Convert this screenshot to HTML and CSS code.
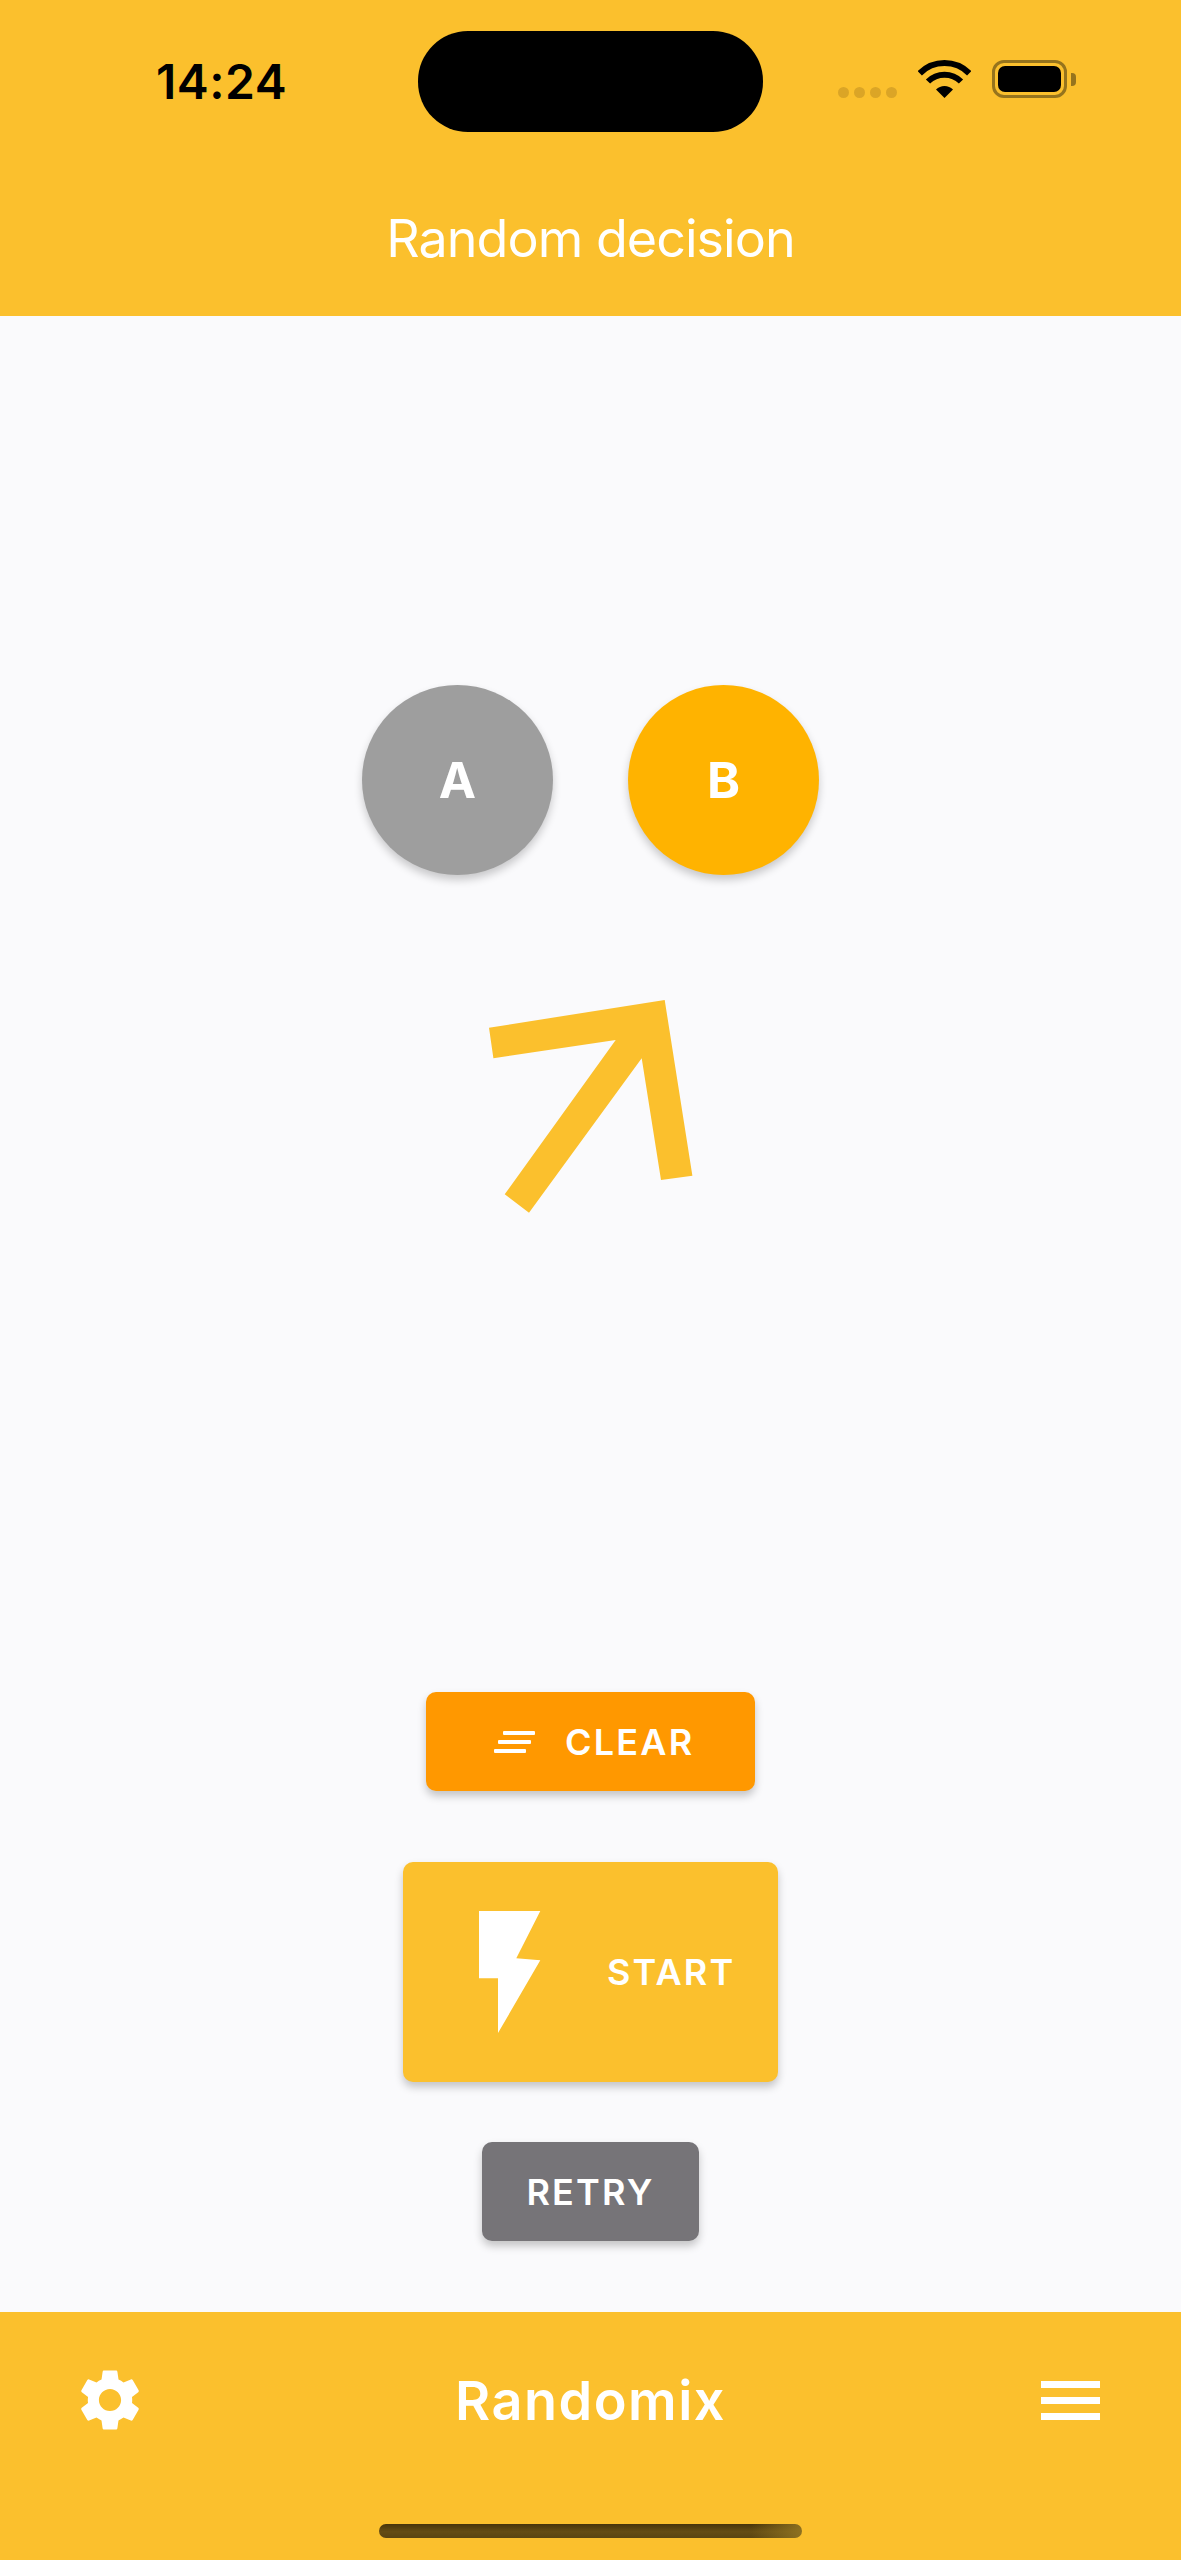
FILE: index.html
```html
<!DOCTYPE html>
<html lang="en">
<head>
  <meta charset="UTF-8">
  <meta name="viewport" content="width=device-width, initial-scale=1.0">
  <title>Randomix - Random decision</title>
  <link rel="stylesheet" href="styles.css">
</head>
<body>
  <div class="screen">
    <header class="top-bar">
      <div class="status-bar">
        <span class="time">14:24</span>
        <span class="island"></span>
        <div class="status-icons">
          <div class="signal"><i></i><i></i><i></i><i></i></div>
          <svg class="wifi" width="53" height="38" viewBox="0 0 53 38">
            <path d="M1.8 13.3A35 35 0 0 1 51.2 13.3" fill="none" stroke="#000" stroke-width="6"/>
            <path d="M10 21.5A23.3 23.3 0 0 1 43 21.5" fill="none" stroke="#000" stroke-width="6"/>
            <path d="M26.5 38L18 29.5A12 12 0 0 1 35 29.5Z" fill="#000"/>
          </svg>
          <div class="battery">
            <div class="battery-body"><div class="battery-fill"></div></div>
            <div class="battery-nub"></div>
          </div>
        </div>
      </div>
      <h1 class="page-title">Random decision</h1>
    </header>

    <main class="content">
      <div class="choices">
        <div class="choice choice-a">A</div>
        <div class="choice choice-b">B</div>
      </div>

      <svg class="arrow" width="204" height="213" viewBox="0 0 204 213">
        <polygon fill="#fbc02d" points="0,27.7 4.4,58.3 126.7,40 15.7,194.3 40,212.7 152.7,58.3 172,180 203.4,175.7 175.7,0"/>
      </svg>

      <button class="btn btn-clear" type="button">
        <svg width="41" height="22" viewBox="0 0 41 22">
          <rect x="9" y="0" width="32" height="4" rx="1" fill="#fff"/>
          <rect x="4" y="9" width="33" height="4" rx="1" fill="#fff"/>
          <rect x="0" y="18" width="32" height="4" rx="1" fill="#fff"/>
        </svg>
        <span>CLEAR</span>
      </button>

      <button class="btn btn-start" type="button">
        <svg width="62" height="122" viewBox="0 0 62 122">
          <polygon fill="#fff" points="0,0 61.3,0 37.3,47.3 61.3,49.3 19,122 19,67.3 0,67.3"/>
        </svg>
        <span>START</span>
      </button>

      <button class="btn btn-retry" type="button">RETRY</button>
    </main>

    <footer class="bottom-bar">
      <div class="bottom-row">
        <svg class="gear" width="74" height="74" viewBox="0 0 24 24">
          <path fill="#fff" d="M19.14 12.94c.04-.3.06-.61.06-.94 0-.32-.02-.64-.07-.94l2.03-1.58c.18-.14.23-.41.12-.61l-1.92-3.32c-.12-.22-.37-.29-.59-.22l-2.39.96c-.5-.38-1.03-.7-1.62-.94l-.36-2.54c-.04-.24-.24-.41-.48-.41h-3.84c-.24 0-.43.17-.47.41l-.36 2.54c-.59.24-1.13.57-1.62.94l-2.39-.96c-.22-.08-.47 0-.59.22L2.74 8.87c-.12.21-.08.47.12.61l2.03 1.58c-.05.3-.09.63-.09.94s.02.64.07.94l-2.03 1.58c-.18.14-.23.41-.12.61l1.92 3.32c.12.22.37.29.59.22l2.39-.96c.5.38 1.03.7 1.62.94l.36 2.54c.05.24.24.41.48.41h3.84c.24 0 .44-.17.47-.41l.36-2.54c.59-.24 1.13-.56 1.62-.94l2.39.96c.22.08.47 0 .59-.22l1.92-3.32c.12-.22.07-.47-.12-.61l-2.01-1.58zM12 15.6c-1.98 0-3.6-1.62-3.6-3.6s1.62-3.6 3.6-3.6 3.6 1.62 3.6 3.6-1.62 3.6-3.6 3.6z"/>
        </svg>
        <div class="app-name">Randomix</div>
        <div class="menu"><span></span><span></span><span></span></div>
      </div>
      <div class="home-indicator"></div>
    </footer>
  </div>
</body>
</html>
```

FILE: styles.css
```css
body {
  margin: 0;
  padding: 0;
  background-color: #fafafc;
  font-family: Inter, "Liberation Sans", sans-serif;
}

.screen {
  display: flex;
  flex-direction: column;
  height: 2560px;
  overflow: hidden;
}

/* top bar */
.top-bar {
  height: 316px;
  flex: none;
  background-color: #fbc02d;
}

.status-bar {
  display: grid;
  grid-template-columns: 418px 345px 1fr;
  align-items: center;
  padding-top: 31px;
}

.time {
  padding-left: 156px;
  font-size: 48px;
  font-weight: 600;
  letter-spacing: 0.5px;
  line-height: 56px;
  color: #000;
}

.island {
  height: 101px;
  border-radius: 50px;
  background-color: #000;
}

.status-icons {
  display: flex;
  align-items: flex-end;
  padding-left: 75px;
  margin-bottom: 5px;
}

.signal {
  display: flex;
  gap: 5px;
  margin-right: 21px;
}

.signal i {
  width: 11px;
  height: 11px;
  border-radius: 50%;
  background-color: #dba526;
}

.battery {
  display: flex;
  align-items: center;
  gap: 4px;
  margin-left: 21px;
}

.battery-body {
  box-sizing: border-box;
  width: 75px;
  height: 38px;
  padding: 3px;
  border: 3px solid #96741d;
  border-radius: 12px;
}

.battery-fill {
  height: 100%;
  border-radius: 7px;
  background-color: #000;
}

.battery-nub {
  width: 5px;
  height: 13px;
  border-radius: 0 4px 4px 0;
  background-color: #96741d;
}

.page-title {
  margin: 77px 0 0;
  font-size: 52px;
  font-weight: 400;
  letter-spacing: -0.95px;
  line-height: 60px;
  text-align: center;
  color: #fff;
}

/* main area */
.content {
  flex: 1;
  display: flex;
  flex-direction: column;
  align-items: center;
}

.choices {
  display: flex;
  gap: 75px;
  margin-top: 369px;
}

.choice {
  display: flex;
  align-items: center;
  justify-content: center;
  width: 191px;
  height: 190px;
  border-radius: 50%;
  font-size: 50px;
  font-weight: 700;
  color: #fff;
  box-shadow: 0 5px 8px rgba(0, 0, 0, 0.2);
}

.choice-a {
  background-color: #9e9e9e;
}

.choice-b {
  background-color: #ffb300;
}

.arrow {
  display: block;
  margin-top: 125px;
}

.btn {
  box-sizing: border-box;
  display: flex;
  align-items: center;
  border: none;
  border-radius: 10px;
  padding: 0;
  font-family: inherit;
  font-size: 36px;
  font-weight: 600;
  letter-spacing: 2.2px;
  color: #fff;
  box-shadow: 0 5px 8px rgba(0, 0, 0, 0.22);
}

.btn-clear {
  width: 329px;
  height: 99px;
  margin-top: 479px;
  padding-left: 68px;
  gap: 30px;
  background-color: #ff9800;
}

.btn-start {
  width: 375px;
  height: 220px;
  margin-top: 71px;
  padding-left: 76px;
  gap: 66px;
  background-color: #fbc02d;
}

.btn-retry {
  width: 217px;
  height: 99px;
  margin-top: 60px;
  justify-content: center;
  background-color: #767478;
}

/* bottom bar */
.bottom-bar {
  height: 248px;
  flex: none;
  background-color: #fbc02d;
}

.bottom-row {
  display: grid;
  grid-template-columns: 1fr auto 1fr;
  align-items: center;
  padding: 51px 73px 0;
}

.gear {
  display: block;
}

.app-name {
  font-size: 54px;
  font-weight: 600;
  letter-spacing: 1.5px;
  color: #fff;
}

.menu {
  display: flex;
  flex-direction: column;
  gap: 9px;
  justify-self: end;
  margin-right: 8px;
}

.menu span {
  display: block;
  width: 59px;
  height: 7px;
  background-color: #fff;
}

.home-indicator {
  width: 423px;
  height: 14px;
  margin: 87px auto 0;
  border-radius: 7px;
  background:
    linear-gradient(90deg, rgba(150, 120, 35, 0) 88%, rgba(150, 120, 35, 0.85) 100%),
    linear-gradient(180deg, #47340b 0%, #654d14 55%, #5a4412 100%);
}
```
